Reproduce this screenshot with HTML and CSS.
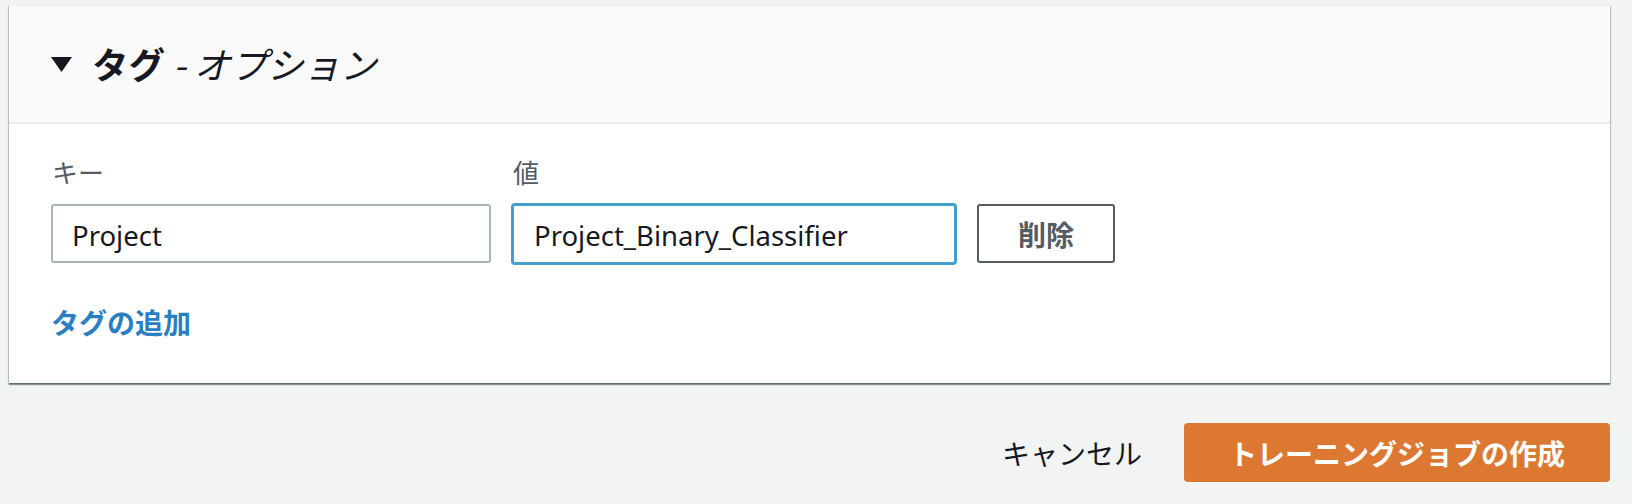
FILE: index.html
```html
<!DOCTYPE html>
<html lang="ja">
<head>
<meta charset="utf-8">
<title>タグ - オプション</title>
<link rel="stylesheet" href="styles.css">
</head>
<body>
<div class="page">
  <section class="card">
    <header class="card-header">
      <svg class="caret" width="21" height="15" viewBox="0 0 21 15" aria-hidden="true"><polygon points="0,0 21,0 10.5,15" fill="#16191f"/></svg>
      <h2 class="title"><span class="title-strong">タグ</span><span class="title-opt"> - オプション</span></h2>
    </header>
    <div class="card-body">
      <div class="tag-row">
        <div class="field field-key">
          <label class="field-label">キー</label>
          <div class="input">Project</div>
        </div>
        <div class="field field-value">
          <label class="field-label">値</label>
          <div class="input input-focus">Project_Binary_Classifier</div>
        </div>
        <button class="btn-remove">削除</button>
      </div>
      <a class="add-link">タグの追加</a>
    </div>
  </section>
  <div class="actions">
    <button class="btn-cancel">キャンセル</button>
    <button class="btn-primary">トレーニングジョブの作成</button>
  </div>
</div>
</body>
</html>
```
FILE: styles.css
```css
* { box-sizing: border-box; }
html, body {
  margin: 0;
  padding: 0;
  background: #f2f3f3;
  font-family: "Noto Sans", "Noto Sans CJK JP", sans-serif;
  color: #16191f;
}
.page {
  width: 1632px;
  height: 504px;
  padding: 5px 22px 0 9px;
}
.card {
  background: #ffffff;
  border-top: 1px solid #eaeded;
  box-shadow: 0 2px 1px 0 rgba(0, 28, 36, 0.42), 1px 1px 1px 0 rgba(0, 28, 36, 0.18), -1px 1px 1px 0 rgba(0, 28, 36, 0.18);
}
.card-header {
  height: 118px;
  background: #fafafa;
  border-bottom: 2px solid #eaeded;
  display: flex;
  align-items: center;
  padding-left: 42px;
}
.caret {
  display: block;
  margin-right: 20px;
  margin-top: 1px;
}
.title {
  margin: 0;
  font-family: "Noto Sans CJK JP", sans-serif;
  font-size: 36.5px;
  line-height: 44px;
  font-weight: 400;
  color: #16191f;
}
.title-strong { font-weight: 700; }
.title-opt { font-style: italic; }
.card-body {
  padding: 32px 42px 42px 42px;
}
.tag-row {
  display: flex;
  align-items: flex-end;
  gap: 20px;
}
.field { display: flex; flex-direction: column; }
.field-key { width: 440px; }
.field-value { width: 446px; }
.field-label {
  font-family: "Noto Sans CJK JP", sans-serif;
  font-size: 26px;
  line-height: 32px;
  color: #545b64;
  margin-bottom: 16px;
  padding-left: 1px;
}
.field-value .field-label { margin-bottom: 15px; padding-left: 2px; }
.input {
  height: 59px;
  border: 2px solid #aab7b8;
  border-radius: 3px;
  background: #fff;
  padding: 3px 19px 0 19px;
  display: flex;
  align-items: center;
  font-family: "Noto Sans", sans-serif;
  font-size: 27.5px;
  color: #16191f;
}
.input-focus {
  height: 62px;
  border: 3px solid #44a0c8;
  border-radius: 4px;
  padding: 3px 20px 0 20px;
  margin-bottom: -2px;
}
.btn-remove {
  width: 138px;
  height: 59px;
  border: 2px solid #545b64;
  border-radius: 3px;
  background: #fff;
  font-family: "Noto Sans CJK JP", sans-serif;
  font-size: 28px;
  font-weight: 700;
  color: #545b64;
  padding: 0;
  cursor: pointer;
}
.add-link {
  display: block;
  margin-top: 40px;
  width: max-content;
  font-family: "Noto Sans CJK JP", sans-serif;
  font-size: 28px;
  line-height: 38px;
  font-weight: 700;
  color: #2a7fc1;
  cursor: pointer;
}
.actions {
  display: flex;
  justify-content: flex-end;
  align-items: center;
  margin-top: 40px;
  gap: 22px;
}
.btn-cancel {
  background: none;
  border: none;
  padding: 0 20px;
  height: 59px;
  font-family: "Noto Sans CJK JP", sans-serif;
  font-size: 28px;
  color: #16191f;
  cursor: pointer;
}
.btn-primary {
  width: 426px;
  height: 59px;
  border: none;
  border-radius: 4px;
  background: #dd7833;
  color: #fff;
  font-family: "Noto Sans CJK JP", sans-serif;
  font-size: 28px;
  font-weight: 700;
  padding: 0;
  cursor: pointer;
}
```
